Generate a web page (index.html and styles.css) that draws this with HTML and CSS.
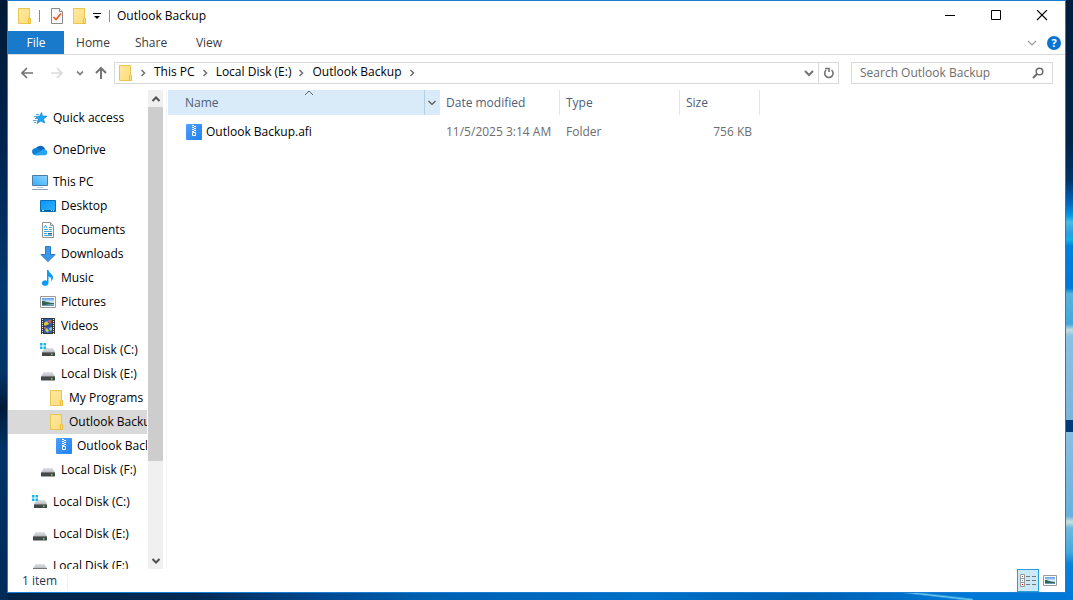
FILE: index.html
```html
<!DOCTYPE html>
<html lang="en">
<head>
<meta charset="utf-8">
<title>Outlook Backup</title>
<link rel="stylesheet" href="styles.css">
</head>
<body>
<svg class="defs" aria-hidden="true">
  <defs>
    <linearGradient id="g-folder" x1="0" y1="0" x2="1" y2="1"><stop offset="0" stop-color="#ffe9a2"/><stop offset="1" stop-color="#fddc78"/></linearGradient>
    <linearGradient id="g-screen" x1="0" y1="1" x2="1" y2="0"><stop offset="0" stop-color="#35aefb"/><stop offset="1" stop-color="#8fd3ff"/></linearGradient>
    <linearGradient id="g-desk" x1="0" y1="0" x2="1" y2="1"><stop offset="0" stop-color="#0b95fa"/><stop offset="1" stop-color="#2fb0ff"/></linearGradient>
    <linearGradient id="g-sky" x1="0" y1="0" x2="0" y2="1"><stop offset="0" stop-color="#5a94ea"/><stop offset=".5" stop-color="#d8f0fb"/><stop offset="1" stop-color="#4f8fae"/></linearGradient>
    <linearGradient id="g-disk" x1="0" y1="0" x2="0" y2="1"><stop offset="0" stop-color="#e2e4e7"/><stop offset="1" stop-color="#b9bcc1"/></linearGradient>
    <linearGradient id="g-zip" x1="0" y1="0" x2="1" y2="1"><stop offset="0" stop-color="#4ea0fb"/><stop offset="1" stop-color="#2280ee"/></linearGradient>
  </defs>
  <symbol id="folder" viewBox="0 0 16 16">
    <path d="M2.500.5h11v9l1 1v5h-12z" fill="url(#g-folder)" stroke="#eac54f"/>
    <path d="M12.500 15.500v-4.500l1-1.500 1 1.500v4.500z" fill="#fde492" stroke="#e6bd3e"/>
  </symbol>
  <symbol id="star" viewBox="0 0 16 16">
    <path d="M9.500 2.500l1 3.500 4.500.2-3.500 2.700 1.200 4.100-3.900-2-3.800 2.500 1.200-4.200L3.500 6.500l4.300-.4z" fill="#1fa5f5" stroke="#1583cc" stroke-width=".7"/>
    <path d="M4 4.500h3M2 6.500h3M3 8.500h2M1 10.500h3.500M2 12.500h2" stroke="#4aa8e4"/>
  </symbol>
  <symbol id="cloud" viewBox="0 0 16 16">
    <path d="M3 8a5.300 5.300 0 0 1 10-1l1 3-10 1z" fill="#0a66c0"/>
    <path d="M4 13.200a3.500 3.500 0 0 1-.8-7c2-.6 3.800.4 5.300 1.800l-1 5.200z" fill="#1080d8"/>
    <path d="M2 12.700l6-3.200c2-2.300 4-2.500 5.500-1.700a2.900 2.900 0 0 1-.3 5.500H4z" fill="#27a4ee"/>
  </symbol>
  <symbol id="pc" viewBox="0 0 16 16">
    <path d="M.5 1.500h15v10H.5z" fill="url(#g-screen)" stroke="#4c7ea5"/>
    <path d="M5 13.500h6" stroke="#b9c8d5"/><path d="M0 15.500h16" stroke="#8ca0b3"/>
  </symbol>
  <symbol id="desktop" viewBox="0 0 16 16">
    <path d="M.5 2.500h15v11H.5z" fill="url(#g-desk)" stroke="#0a70b5"/>
    <path d="M1 12.500h14" stroke="#075c9a"/><path d="M2 12.500h2M11 12.500h1M13 12.500h1" stroke="#c6e8ff"/>
  </symbol>
  <symbol id="doc" viewBox="0 0 16 16">
    <path d="M2.500.5h8l3 3v12h-11z" fill="#fff" stroke="#929292"/><path d="M10.500.5v3h3" fill="#ddd" stroke="#929292"/>
    <path d="M4 6l1.500-3 1.500 3M4 7.500h4M9 5.500h3M9 7.500h3M4 9.500h8M4 11.500h3M4 13.500h8" fill="none" stroke="#41a5d9"/>
    <path d="M8 11h4v1.500H8z" fill="#335f81"/>
  </symbol>
  <symbol id="down" viewBox="0 0 16 16">
    <path d="M5.500.5h5v8h4.700L8 15.500.8 8.500h4.700z" fill="#3a98ea" stroke="#2c7ac5"/>
  </symbol>
  <symbol id="music" viewBox="0 0 16 16">
    <path d="M7 0h1.500c.2 3 4.500 4 4.500 7.500 0 1.500-.8 3-2 4 1-3-.5-4.500-2.500-5V13a3.300 2.800 0 1 1-1.500-2.300z" fill="#0b9cf4"/>
  </symbol>
  <symbol id="picture" viewBox="0 0 16 16">
    <path d="M.5 2.500h15v11H.5z" fill="#fff" stroke="#9a9a9a"/>
    <path d="M2 4h12v8H2z" fill="url(#g-sky)"/><path d="M2 7c4 0 6 2 12 2v1c-4-.5-8 1.500-12 1z" fill="#35634f"/>
  </symbol>
  <symbol id="video" viewBox="0 0 16 16">
    <path d="M1 0h14v16H1z" fill="#363636"/><path d="M4 1h8v6.500H4zM4 8.500h8V15H4z" fill="#2862bd"/>
    <path d="M2.500 1v15M13.500 1v15" stroke="#f5f5f5" stroke-dasharray="1 1"/>
    <path d="M4 5l3-2 2 3-3 1.500H4zM5 12l2-2 2 3-2 1.500z" fill="#e8c13f"/><path d="M8 2h3v3H9zM4 9h2v2H4z" fill="#c65b50"/><path d="M9 10l3-1v3l-2 1z" fill="#7fc4ea"/>
  </symbol>
  <symbol id="disk" viewBox="0 0 16 16">
    <path d="M3.500 6h9l2 4h-13z" fill="url(#g-disk)"/><path d="M1 10h14v4.500H1z" fill="#45484a"/><path d="M1 10.500h14" stroke="#77797b"/><path d="M11 12h1.500v1.500H11z" fill="#50ee5f"/>
  </symbol>
  <symbol id="sysdisk" viewBox="0 0 16 16">
    <path d="M4.500 6h8.500l2 4H2z" fill="url(#g-disk)"/><path d="M2 10h13v4H2z" fill="#45484a"/><path d="M2 10.500h13" stroke="#77797b"/><path d="M11 11.500h1.500V13H11z" fill="#50ee5f"/>
    <path d="M0 1h2.500v2.500H0zM3.500 1H6v2.500H3.500zM0 4.500h2.500V7H0zM3.500 4.500H6V7H3.500z" fill="#13b5f2"/>
  </symbol>
  <symbol id="zip" viewBox="0 0 16 16">
    <rect width="16" height="16" rx="1" fill="url(#g-zip)"/>
    <path d="M6 1.500h2M8 2.500h2M6 3.500h2M8 4.500h2M6 5.500h2M8 6.500h2M6 7.500h2" stroke="#fff"/>
    <path d="M6.500 8.500h3v3h-3z" fill="none" stroke="#fff"/>
  </symbol>
  <symbol id="check" viewBox="0 0 16 16">
    <path d="M2.500.5h8l3 3v12h-11z" fill="#f8f8fa" stroke="#8a8a8a"/><path d="M10.500.5v3h3" fill="#fff" stroke="#8a8a8a"/>
    <path d="M4.500 9l2.500 2.500 5-6" fill="none" stroke="#ee5a24" stroke-width="1.700"/>
  </symbol>
  <symbol id="chev-down" viewBox="0 0 8 8"><path d="M1 2.500l3 3 3-3" fill="none" stroke="currentColor" stroke-width="1.800"/></symbol>
  <symbol id="chev-right" viewBox="0 0 8 8"><path d="M2.500 1l3 3-3 3" fill="none" stroke="currentColor" stroke-width="1.600"/></symbol>
  <symbol id="thin-down" viewBox="0 0 10 10"><path d="M1 3l4 4 4-4" fill="none" stroke="currentColor" stroke-width="1.200"/></symbol>
  <symbol id="scroll-chev" viewBox="0 0 10 10"><path d="M1.500 7L5 3.500 8.500 7" fill="none" stroke="currentColor" stroke-width="2"/></symbol>
</svg>

<main class="window">
  <header class="titlebar">
    <svg class="icon"><use href="#folder"/></svg>
    <span class="rule"></span>
    <button class="quick" aria-label="Properties"><svg class="icon"><use href="#check"/></svg></button>
    <button class="quick" aria-label="New folder"><svg class="icon"><use href="#folder"/></svg></button>
    <button class="customize" aria-label="Customize toolbar"><svg class="glyph8" viewBox="0 0 8 8"><path d="M0 1.500h8" stroke="#000"/><path d="M1 4h6L4 7z"/></svg></button>
    <span class="rule"></span>
    <h1 class="title">Outlook Backup</h1>
    <div class="controls">
      <button class="control" aria-label="Minimize"><svg class="glyph12" viewBox="0 0 12 12"><path d="M1 5.500h10" stroke="#000"/></svg></button>
      <button class="control" aria-label="Maximize"><svg class="glyph12" viewBox="0 0 12 12"><path d="M1.500.5h9v9h-9z" fill="none" stroke="#000"/></svg></button>
      <button class="control" aria-label="Close"><svg class="glyph12" viewBox="0 0 12 12"><path d="M1 0l10 10M11 0L1 10" stroke="#000" stroke-width="1.100"/></svg></button>
    </div>
  </header>

  <nav class="ribbon">
    <button class="tab tab-file">File</button>
    <button class="tab">Home</button>
    <button class="tab">Share</button>
    <button class="tab">View</button>
    <div class="ribbon-end">
      <button class="expand" aria-label="Expand ribbon"><svg class="glyph10"><use href="#thin-down"/></svg></button>
      <button class="help" aria-label="Help">?</button>
    </div>
  </nav>

  <div class="location">
    <div class="history">
      <button class="plain" aria-label="Back"><svg class="arrow" viewBox="0 0 14 14"><path d="M13 7H2M7 2L2 7l5 5" fill="none" stroke="#747474" stroke-width="1.700"/></svg></button>
      <button class="plain forward" aria-label="Forward"><svg class="arrow" viewBox="0 0 14 14"><path d="M1 7h11M7 2l5 5-5 5" fill="none" stroke="#dadada" stroke-width="1.700"/></svg></button>
      <button class="plain recent" aria-label="Recent locations"><svg class="glyph8"><use href="#chev-down"/></svg></button>
      <button class="plain" aria-label="Up"><svg class="arrow" viewBox="0 0 14 14"><path d="M7 13V2M2 7l5-5 5 5" fill="none" stroke="#747474" stroke-width="2"/></svg></button>
    </div>
    <div class="address">
      <svg class="icon"><use href="#folder"/></svg>
      <svg class="glyph8 crumb-sep"><use href="#chev-right"/></svg>
      <button class="crumb">This PC</button>
      <svg class="glyph8 crumb-sep"><use href="#chev-right"/></svg>
      <button class="crumb">Local Disk (E:)</button>
      <svg class="glyph8 crumb-sep"><use href="#chev-right"/></svg>
      <button class="crumb">Outlook Backup</button>
      <svg class="glyph8 crumb-sep"><use href="#chev-right"/></svg>
      <button class="drop" aria-label="Previous locations"><svg class="glyph10" viewBox="0 0 10 10"><path d="M1 3l4 4 4-4" fill="none" stroke="#747474" stroke-width="2"/></svg></button>
      <button class="refresh" aria-label="Refresh"><svg class="glyph12" viewBox="0 0 12 12"><path d="M8.500 3A4.200 4.200 0 1 1 3.200 3M2 1.500h4V5" fill="none" stroke="#747474" stroke-width="1.600"/></svg></button>
    </div>
    <label class="search">
      <input class="search-input" type="text" placeholder="Search Outlook Backup" aria-label="Search Outlook Backup">
      <svg class="glyph12" viewBox="0 0 12 12"><circle cx="7.500" cy="4.500" r="3.300" fill="none" stroke="#6b6b6b" stroke-width="1.500"/><path d="M5 7L1 11" stroke="#6b6b6b" stroke-width="2"/></svg>
    </label>
  </div>

  <div class="panes">
    <aside class="sidebar">
      <nav class="tree">
        <a class="node root" href="#"><svg class="icon"><use href="#star"/></svg>Quick access</a>
        <a class="node root" href="#"><svg class="icon"><use href="#cloud"/></svg>OneDrive</a>
        <div class="group">
          <a class="node root" href="#"><svg class="icon"><use href="#pc"/></svg>This PC</a>
          <a class="node level1" href="#"><svg class="icon"><use href="#desktop"/></svg>Desktop</a>
          <a class="node level1" href="#"><svg class="icon"><use href="#doc"/></svg>Documents</a>
          <a class="node level1" href="#"><svg class="icon"><use href="#down"/></svg>Downloads</a>
          <a class="node level1" href="#"><svg class="icon"><use href="#music"/></svg>Music</a>
          <a class="node level1" href="#"><svg class="icon"><use href="#picture"/></svg>Pictures</a>
          <a class="node level1" href="#"><svg class="icon"><use href="#video"/></svg>Videos</a>
          <a class="node level1" href="#"><svg class="icon"><use href="#sysdisk"/></svg>Local Disk (C:)</a>
          <a class="node level1" href="#"><svg class="icon"><use href="#disk"/></svg>Local Disk (E:)</a>
          <a class="node level2" href="#"><svg class="icon"><use href="#folder"/></svg>My Programs</a>
          <a class="node level2 selected" href="#"><svg class="icon"><use href="#folder"/></svg>Outlook Backup</a>
          <a class="node level3" href="#"><svg class="icon"><use href="#zip"/></svg>Outlook Backup.afi</a>
          <a class="node level1" href="#"><svg class="icon"><use href="#disk"/></svg>Local Disk (F:)</a>
        </div>
        <a class="node root" href="#"><svg class="icon"><use href="#sysdisk"/></svg>Local Disk (C:)</a>
        <a class="node root" href="#"><svg class="icon"><use href="#disk"/></svg>Local Disk (E:)</a>
        <a class="node root" href="#"><svg class="icon"><use href="#disk"/></svg>Local Disk (F:)</a>
      </nav>
      <div class="scrollbar">
        <button class="scroll-btn" aria-label="Scroll up"><svg class="glyph10"><use href="#scroll-chev"/></svg></button>
        <div class="track"><div class="thumb" style="height: 79.5%"></div></div>
        <button class="scroll-btn scroll-down" aria-label="Scroll down"><svg class="glyph10"><use href="#scroll-chev"/></svg></button>
      </div>
    </aside>

    <section class="content">
      <table class="files">
        <colgroup><col class="col-name"><col class="col-wide"><col class="col-wide"><col class="col-size"></colgroup>
        <thead>
          <tr>
            <th class="sorted" scope="col">
              <div class="sorted-head">
                <span>Name</span>
                <button class="filter" aria-label="Filter by name"><svg class="glyph8" viewBox="0 0 8 8"><path d="M.5 2L4 5.500 7.500 2" fill="none" stroke="#555" stroke-width="1.200"/></svg></button>
              </div>
              <svg class="sort-mark" viewBox="0 0 10 6"><path d="M1 5l4-4 4 4" fill="none" stroke="#666"/></svg>
            </th>
            <th scope="col">Date modified</th>
            <th scope="col">Type</th>
            <th scope="col">Size</th>
          </tr>
        </thead>
        <tbody>
          <tr>
            <td class="name"><div class="file"><svg class="icon"><use href="#zip"/></svg>Outlook Backup.afi</div></td>
            <td>11/5/2025 3:14 AM</td>
            <td>Folder</td>
            <td class="size">756 KB</td>
          </tr>
        </tbody>
      </table>
    </section>
  </div>

  <footer class="status">
    <span class="count">1 item</span>
    <div class="views">
      <button class="view active" aria-label="Details view"><svg class="icon" viewBox="0 0 16 16"><path d="M.5 1.500h4v4h-4zM.5 5.500h4v4h-4zM.5 9.500h4v4h-4z" fill="#fff" stroke="#999"/><path d="M2 3.500h1" stroke="#555"/><path d="M2 7.500h1" stroke="#4a90ee"/><path d="M2 11.500h1" stroke="#d22"/><path d="M6 3.500h4M12 3.500h4M6 7.500h4M12 7.500h4M6 11.500h4M12 11.500h4" stroke="#777"/></svg></button>
      <button class="view" aria-label="Large icons view"><svg class="thumbs" viewBox="0 0 14 12"><path d="M.5.5h13v10H.5z" fill="#fff" stroke="#999"/><path d="M2 2h10v7H2z" fill="url(#g-sky)"/><path d="M2 5c3 0 5 2 10 2v1H2z" fill="#35634f"/></svg></button>
    </div>
  </footer>
</main>
</body>
</html>
```

FILE: styles.css
```css
* { box-sizing: border-box; }

body {
  margin: 0;
  height: 100vh;
  padding: 0 7px 7px;
  display: flex;
  font: 12px/16px "Open Sans", "Noto Sans", sans-serif;
  color: #000;
  background:
    linear-gradient(180deg, #001c3c 0, #002448 24%, #003468 30%, #0068c0 34%, #0a9ae0 36%, #4ab8e6 37%, #2a9fde 39%, #12b0e4 40%, #0080dc 41%, #0078d8 48%, #58b4dc 49%, #42a6dc 54%, #c5dce0 55%, #8ac2e2 56%, #7bb4da 70%, #003b78 70%, #003b78 72%, #8abfe2 72%, #67b1dc 86%, #cfdfdc 87%, #6db8e0 88%, #45a8dc 92%, #0a80d8 94%, #0078d8 100%) right top / 8px 100% no-repeat,
    linear-gradient(180deg, #001a35 0, #002450 25%, #003a70 48%, #003568 62%, #001a38 68%, #003468 75%, #002a58 100%) left top / 8px 100% no-repeat,
    linear-gradient(to top right, transparent 40%, #6cc8ea 50%, transparent 62%) calc(100% - 100px) bottom / 70px 8px no-repeat,
    linear-gradient(90deg, #002548 0, #002a54 18%, #004890 30%, #0060b0 40%, #0070c8 60%, #0060b0 75%, #0078d8 90%, #0078d8 100%);
}

button {
  font: inherit;
  color: inherit;
  border: 0;
  padding: 0;
  background: none;
}

svg { display: block; flex: none; }
.defs { position: absolute; width: 0; height: 0; }
.icon { width: 16px; height: 16px; }
.glyph8 { width: 8px; height: 8px; }
.glyph10 { width: 10px; height: 10px; }
.glyph12 { width: 12px; height: 12px; }

.window {
  flex: 1;
  min-width: 0;
  display: flex;
  flex-direction: column;
  background: #fff;
  border: 1px solid #1a7fd4;
}

.titlebar {
  display: flex;
  align-items: center;
  height: 30px;
  padding-left: 8px;
}
.rule { width: 1px; height: 12px; margin: 0 9px 0 7px; background: #8c8c8c; }
.quick { margin-right: 6px; }
.customize { margin-right: 1px; }
.title { margin: 0 0 0 -2px; font-size: 12px; font-weight: 400; }
.controls { display: flex; margin-left: auto; height: 100%; }
.control { width: 46px; display: grid; place-items: center; }

.ribbon {
  display: flex;
  height: 24px;
  border-bottom: 1px solid #dadbdc;
  color: #3b3b3b;
}
.tab { width: 58px; }
.tab-file { width: 56px; background: #1979ca; color: #fff; }
.ribbon-end { display: flex; align-items: center; gap: 10px; margin-left: auto; padding-right: 4px; }
.expand { color: #999; }
.help {
  width: 14px;
  height: 14px;
  border-radius: 50%;
  background: #0873d2;
  color: #fff;
  font-size: 11px;
  font-weight: 700;
  line-height: 14px;
}

.location {
  display: flex;
  align-items: center;
  height: 35px;
  padding: 0 12px;
}
.history { display: flex; align-items: center; color: #888; margin-right: 6px; }
.plain { margin-right: 16px; }
.recent { margin-right: 10px; }
.forward { margin-right: 12px; }
.plain:last-child { margin-right: 0; }
.arrow { width: 14px; height: 14px; }
.address {
  flex: 1;
  display: flex;
  align-items: center;
  height: 22px;
  border: 1px solid #d9d9d9;
  padding-left: 2px;
}
.crumb { padding-bottom: 2px; }
.crumb-sep { margin: 0 7px 0 6px; color: #747474; }
.drop { width: 18px; margin-left: auto; display: grid; place-items: center; }
.refresh {
  width: 20px;
  height: 20px;
  border-left: 1px solid #d9d9d9;
  display: grid;
  place-items: center;
}
.search {
  display: flex;
  align-items: center;
  width: 202px;
  height: 22px;
  margin-left: 12px;
  padding: 0 8px;
  border: 1px solid #d9d9d9;
}
.search-input { flex: 1; min-width: 0; border: 0; padding: 0; outline: 0; font: inherit; background: none; }
.search-input::placeholder { color: #6d6d6d; opacity: 1; }

.panes { flex: 1; min-height: 0; display: flex; }
.sidebar { display: flex; width: 159px; border-right: 1px solid #f4f4f4; }
.tree {
  flex: 1;
  min-width: 0;
  overflow: hidden;
  display: flex;
  flex-direction: column;
  gap: 8px;
  padding-top: 16px;
}
.node {
  display: flex;
  flex: none;
  align-items: center;
  gap: 5px;
  height: 24px;
  white-space: nowrap;
  color: #000;
  text-decoration: none;
}
.root { padding-left: 24px; }
.level1 { padding-left: 32px; }
.level2 { padding-left: 40px; }
.level3 { padding-left: 48px; }
.selected { background: #d9d9d9; }

.scrollbar { width: 15px; margin: 0 3px 0 1px; display: flex; flex-direction: column; background: #f0f0f0; color: #505050; }
.scroll-btn { height: 17px; display: grid; place-items: center; }
.scroll-down svg { transform: rotate(180deg); }
.track { flex: 1; }
.thumb { background: #cdcdcd; }

.content { flex: 1; padding-left: 1px; }
.files { width: 592px; table-layout: fixed; border-collapse: separate; border-spacing: 0; }
.col-name { width: 272px; }
.col-wide { width: 120px; }
.col-size { width: 80px; }
.files th {
  height: 25px;
  padding: 0 6px;
  text-align: left;
  font-weight: 400;
  color: #4c607a;
  border-right: 1px solid #e5e5e5;
}
.files .sorted { position: relative; padding: 0 0 0 17px; border: 0; background: #d9ebf9; }
.sorted-head { display: flex; align-items: center; justify-content: space-between; }
.filter { width: 16px; height: 25px; padding-right: 2px; border-left: 1px solid #b5cfe2; display: grid; place-items: center; }
.sort-mark { position: absolute; top: 0; left: 50%; width: 10px; height: 6px; }
.files td { height: 33px; padding: 0 6px; color: #6d6d6d; white-space: nowrap; }
.files .name { padding-left: 18px; color: #000; }
.files .size { padding-right: 8px; text-align: right; }
.file { display: flex; align-items: center; gap: 4px; }

.status { display: flex; align-items: center; height: 23px; color: #1e395b; }
.count { padding: 0 10px 0 14px; border-right: 1px solid #f0f0f0; }
.views { display: flex; height: 100%; margin-left: auto; padding-right: 4px; }
.view { width: 22px; display: grid; place-items: center; }
.active { border: 1px solid #26a0da; background: #cbe8f6; }
.thumbs { width: 14px; height: 12px; }
```
